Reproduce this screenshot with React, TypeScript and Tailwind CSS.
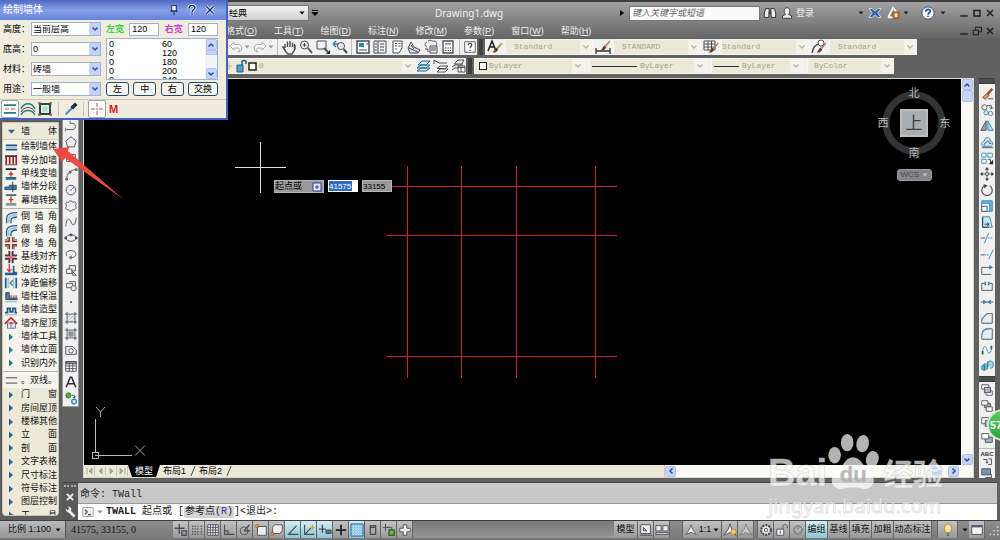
import type { ReactNode } from "react";

const Svg = (props: { children: ReactNode; className?: string; box?: string }) => (
  <svg
    viewBox={props.box ?? "0 0 16 16"}
    className={props.className ?? "size-4 shrink-0"}
    fill="none"
    stroke="#4a4d55"
    strokeWidth="1"
    aria-hidden="true"
  >
    {props.children}
  </svg>
);

const BLUE = "#2f86b8";
const PALE = "#cfe6f4";

const Down = ({ className = "size-1.5 shrink-0" }: { className?: string }) => (
  <Svg box="0 0 6 6" className={className}>
    <path d="M0.5 1.5H5.5L3 4.5Z" fill="currentColor" stroke="none" />
  </Svg>
);

const Brush = () => (
  <g stroke="none">
    <path d="M14.5 3.5 15.5 4.5 11 10 9.5 8.8Z" fill="#b98350" />
    <path d="M9.6 8.8 11.2 10.2C10.5 13 8 14 5.5 13.5 7.5 12.5 7 10 9.6 8.8Z" fill="#6b3a22" />
  </g>
);

/* ---------- draw toolbar ---------- */

const drawIcons: [string, ReactNode][] = [
  ["直线", <path d="M3 3 13 13" />],
  ["构造线", <path d="M2 14 14 2M6 6l4 4" />],
  ["多段线", <path d="M3 12H10C14 12 14 5 10 5H7V2M2 10v4" />],
  ["正多边形", <path d="M8 2 14 7 11.8 13.5H4.2L2 7Z" fill="#e9edf4" />],
  ["矩形", <path d="M3 4H13V12H3ZM2 3h2M12 13h2" />],
  ["圆弧", <path d="M3 14C3 8 7 3 14 3M2 13h2v2H2ZM13 2h2v2h-2ZM6 5h2v2H6Z" />],
  ["圆", <><circle cx="8" cy="8" r="5.5" fill="#eef0f5" /><path d="M8 8 12 4M7 8h2" stroke={BLUE} /></>],
  ["修订云线", <path d="M5 4C6 1 10 2 10 4 13 2 15 5 13 7.500 15 10 13 13 10 12 9 15 5 14 5 12 2 13 1 10 3 8 1 5 3 3 5 4Z" fill="#eef0f5" />],
  ["样条曲线", <path d="M2 13C3 3 6 3 8 8S13 13 14 3" />],
  ["椭圆", <><ellipse cx="8" cy="8" rx="6" ry="3.700" /><path d="M7 3.500h2v2H7ZM1 7h2v2H1ZM13 7h2v2h-2Z" fill="#4a4d55" /></>],
  ["椭圆弧", <path d="M3 10C1 6 5 4 8 4 12 4 15 7 13 10 12 12 10 12 8 12M8 10v4L6 12Z" />],
  ["插入块", <><path d="M6 3H13V9H6Z" fill="#e5e8ef" /><path d="M3 7H9V12H3ZM10 10v4h4L10 10" fill="#f6f6f6" /></>],
  ["创建块", <><path d="M3 5H10V10H3ZM6 3h7v5" fill="#f1f1f1" /><circle cx="11" cy="10.5" r="3" fill="#e5e8ef" /></>],
  ["点", <path d="M7 7h2v2H7Z" fill="#4a4d55" stroke="none" />],
  ["图案填充", <><path d="M3.5 1V15M12.5 1V15M1 3.500H15M1 12.500H15" /><path d="M4 8 8 4M4 12 12 4M8 12l4-4" stroke={BLUE} strokeDasharray="1 1" /></>],
  ["渐变色", <><path d="M5 5H11V11H5Z" fill="#8b93a3" stroke="none" /><path d="M3.5 1V15M12.5 1V15M1 3.500H15M1 12.500H15" /></>],
  ["面域", <><path d="M2 4H10L14 8V13H2Z" fill="#e9edf4" /><circle cx="8" cy="9" r="2.5" fill="#fff" /></>],
  ["表格", <><path d="M2 3H14V14H2ZM6 5V14M10 5V14M2 8H14M2 11H14" fill="#fff" /><path d="M2 3H14V5.500H2Z" fill="#8190a8" /></>],
  ["多行文字", <path d="M2.5 14 7.2 2.500H8.800L13.500 14M4.800 10H11.200" stroke="#303238" strokeWidth="1.8" />],
  ["添加选定对象", <><circle cx="5" cy="5" r="3" fill="#54ae3d" stroke="#347a28" /><path d="M9 5h3v3M10 7l2 1 1-2" /><circle cx="11.500" cy="12" r="2.7" fill={PALE} stroke={BLUE} strokeWidth="1.5" /></>],
];

/* ---------- modify toolbar ---------- */

const modifyIcons: [string, ReactNode][] = [
  ["删除", <><path d="M14 2 8 9" stroke="#8c5934" strokeWidth="3" /><path d="M8 7 10 10 6 14 3 12Z" fill="#e79b55" stroke="#8a3f25" /><path d="M9 13.500h6" /></>],
  ["复制", <><circle cx="5" cy="5" r="3" /><path d="M8 3h5v4M11 5l2 2 2-2" /><circle cx="7" cy="11" r="2.4" stroke={BLUE} /><circle cx="12" cy="12" r="2.5" stroke={BLUE} /></>],
  ["镜像", <><path d="M7 2V13H1Z" fill="#99a1ae" /><path d="M9 2V13H15Z" fill="#a8d6ef" stroke={BLUE} /></>],
  ["偏移", <><path d="M3 13C0 9 4 7 5 7 5 1 12 2 12 7 15 7 15 11 13 13Z" stroke={BLUE} fill={PALE} /><path d="M5 12C4 10 6 9 7 9 8 5 11 7 10.500 9.500H13M2 14.500h13" /></>],
  ["阵列", <><path d="M2 2.500H7V7H2ZM9 2.500H14V7H9ZM2 9.500H7V14H2Z" stroke={BLUE} fill="#fff" /><path d="M9 9.500H12V14" /><path d="M15 10v5h-5Z" fill="#222" stroke="none" /></>],
  ["移动", <><path d="M8 1V6M8 10V15M1 8H6M10 8H15M6.500 6.500h3v3h-3Z" /><path d="M8 0 10.500 3H5.500ZM8 16 10.500 13H5.500ZM0 8 3 5.500V10.500ZM16 8 13 5.500V10.500Z" fill="#444" stroke="none" /></>],
  ["旋转", <><path d="M5 3.200A6 6 0 1 0 11 3.200" strokeWidth="1.300" /><path d="M4 1 9 3 5 6Z" fill="#444" stroke="none" /></>],
  ["缩放", <><path d="M2 2H14V14H2Z" fill="#6fb9df" stroke={BLUE} /><path d="M2 5H11V14H2Z" fill="#e8f3fa" stroke={BLUE} /><path d="M2 8.500H8V14H2Z" fill="#fff" /></>],
  ["拉伸", <><path d="M5 2H11L14 14H3V2Z" fill="#c5e3f3" stroke={BLUE} /><path d="M3 2V14H10M5 10.500h5M8 8.500l2.500 2L8 12.500" stroke="#333" /></>],
  ["修剪", <><path d="M1 8H6" /><path d="M5 14 10 2" stroke={BLUE} /><path d="M9 8h6" stroke={BLUE} strokeDasharray="2 1" /></>],
  ["延伸", <><path d="M1 9H5" /><path d="M5 9h6" stroke={BLUE} strokeDasharray="2 1" /><path d="M10 14 15 3" stroke={BLUE} /></>],
  ["打断于点", <><path d="M14 5H2V13H13" /><path d="M11 3v4l3-2Z" fill={BLUE} stroke={BLUE} /></>],
  ["打断", <><path d="M5 5H2V13H14V5H11" fill="#e9edf4" /><path d="M5 3h2v4H5ZM9 3h2v4H9Z" fill={BLUE} stroke="none" /></>],
  ["合并", <><path d="M1 8H15" /><path d="M4 6 7 8 4 10ZM12 6 9 8 12 10Z" fill={BLUE} stroke={BLUE} /></>],
  ["倒角", <><path d="M8 3H14V14H2V9" fill="#e4ebf3" /><path d="M2 9 8 3" stroke={BLUE} strokeWidth="1.5" /></>],
  ["圆角", <><path d="M10 2H14V14H2V10" fill="#e4ebf3" /><path d="M2 10C2 5 5 2 10 2" stroke={BLUE} strokeWidth="1.5" /></>],
  ["光顺曲线", <><path d="M3 13V9M13 3V7" strokeWidth="2" /><path d="M3 9C4 2 7 3 8 8S12 13 13 7" stroke={BLUE} /></>],
  ["分解", <><path d="M2 8 6 5 9 7V11L5 13 2 12Z" fill="#69b8d8" stroke={BLUE} /><path d="M8 4 12 2 15 4V9L12 11" fill="#a6d5eb" stroke={BLUE} /><path d="M9 3v6M5 7v5" stroke="#1d617f" /></>],
];

const orderIcons: [string, ReactNode][] = [
  ["前置", <><path d="M2 2H10V7H2ZM7 9H14V14H7Z" fill="#fff" /><path d="M5 5H12V11H5Z" fill="#a9b1bd" /></>],
  ["后置", <><path d="M5 5H12V10H5Z" fill="#a9b1bd" /><path d="M2 2H9V7H2ZM7 9H14V14H7Z" fill="#fff" /></>],
  ["置于对象之上", <><path d="M2 3H10V10H2Z" fill="#fff" /><path d="M6 6H14V13H6Z" fill="#a9b1bd" /></>],
  ["置于对象之下", <><path d="M6 7H14V13H6Z" fill="#a9b1bd" /><path d="M2 3H10V9H2Z" fill="#fff" /></>],
];

const ToolColumn = ({ items }: { items: [string, ReactNode][] }) => (
  <>
    {items.map(([name, art]) => (
      <button key={name} type="button" aria-label={name} className="flex h-4 w-full shrink-0 items-center justify-center">
        <Svg className="size-3.5">{art}</Svg>
      </button>
    ))}
  </>
);

const Grip = () => <div className="h-1.5 shrink-0 border-y border-[#3c3c3c] bg-[#4c4c4c]" />;

/* ---------- left palette ---------- */

const wallTools: [string, ReactNode][] = [
  ["绘制墙体", <><path d="M2 6H15M2 11H15" stroke="#27527e" strokeWidth="2" /><path d="M2 8.500H15" stroke="#a5c5df" strokeWidth="2" /></>],
  ["等分加墙", <><path d="M1 3.500H15" stroke="#333" strokeWidth="2" /><path d="M2.500 4V13M6.500 4V13M10.500 4V13M14 4V13" stroke="#9e2633" strokeWidth="2" /><path d="M1 13.500h14" /></>],
  ["单线变墙", <><path d="M2 2.500H14" stroke="#222" strokeWidth="2" /><path d="M8 5V11M5.500 8H10.500" stroke="#d02b2b" strokeWidth="1.500" /><path d="M2 13H14" stroke="#2b678b" strokeWidth="3" /></>],
  ["墙体分段", <><path d="M1 8H6V6H14V11H1Z" fill="#4779a4" stroke="#24557e" /><path d="M10 2V14" stroke="#24334d" /></>],
  ["幕墙转换", <><path d="M2 2.500H14" stroke="#466" strokeWidth="2" /><path d="M8 4V11M5.500 7.500H10.500" stroke="#d02b2b" strokeWidth="1.500" /><path d="M2 13H14" stroke="#849d9d" strokeWidth="3" /></>],
];

const filletArt = <><path d="M3 15V9C3 5 6 3 15 3M8 15V12C8 9 10 8 15 8" stroke="#285f92" strokeWidth="1.500" /><path d="M5.500 15V10C5.500 7 8 5.500 15 5.500" stroke="#9ac5e5" strokeWidth="2" /></>;

const editTools: [string, ReactNode][] = [
  ["倒 墙 角", filletArt],
  ["倒 斜 角", filletArt],
  ["修 墙 角", <><path d="M6 1V6H1M10 1V6H15M6 15V10H1M10 15V10H15" stroke="#8c3a31" strokeWidth="2" /><path d="M4 1V4H1M12 1V4H15M4 15V12H1M12 15V12H15" stroke="#5f88ac" /></>],
  ["基线对齐", <><path d="M6 1V6H1M10 1V6H15M6 15V10H1M10 15V10H15" stroke="#413f4c" strokeWidth="2" /><path d="M8 2V14M2 8H14" stroke="#ce2f38" /></>],
  ["边线对齐", <><path d="M1 12.500H15" stroke="#285f92" strokeWidth="3" /><path d="M11 3V11H15" stroke="#285f92" strokeWidth="2" /><path d="M6 1V10M3.500 7 6 10 8.500 7" stroke="#d8324a" strokeWidth="1.500" /></>],
  ["净距偏移", <><path d="M2 2V14M14 2V14" stroke="#29618c" strokeWidth="2" /><path d="M5 2V14M11 2V14" stroke="#a2c8df" strokeWidth="2" /><path d="M10 5 7 8 10 11" stroke="#267b86" strokeWidth="1.500" /></>],
  ["墙柱保温", <><path d="M2 3V11H15V9H6V3Z" fill="#55799a" stroke="#273e5e" /><path d="M7 7h8" stroke="#a43e3e" strokeWidth="1.500" strokeDasharray="2 1" /><path d="M1 13.500h14" stroke="#7babc9" /></>],
  ["墙体造型", <><path d="M1 11H4V6H7V10H10V6H13V11H15" stroke="#225c8c" strokeWidth="2" /><path d="M1 13.500H15" stroke="#7babc9" /></>],
  ["墙齐屋顶", <><path d="M4 8H13V14H4Z" fill="#dfeaf2" stroke="#4c6e90" /><path d="M1 9 8 2 15 9" stroke="#be2735" strokeWidth="2" /><path d="M8 13V7M6 9l2-2 2 2" stroke="#be2735" /></>],
  ["墙体工具", "teal"],
  ["墙体立面", "teal"],
  ["识别内外", "teal"],
];

const moreTools = ["门 窗", "房间屋顶", "楼梯其他", "立 面", "剖 面", "文字表格", "尺寸标注", "符号标注", "图层控制", "工 具"];

const PaletteRow = ({ label, art }: { label: string; art: ReactNode }) => (
  <button type="button" className="flex min-h-0 w-full items-center gap-[3px] pl-px">
    {art === "teal" || art === "navy" ? (
      <Svg box="0 0 14 14" className="size-3.5 shrink-0">
        <path d="M5 3.500V10.500L9 7Z" fill={art === "teal" ? "#178079" : "#2d5f94"} stroke="none" />
      </Svg>
    ) : (
      <Svg className="size-3.5 shrink-0">{art}</Svg>
    )}
    <span className="flex w-9 justify-between whitespace-nowrap">
      {label.split(" ").map((part) => (
        <span key={part}>{part}</span>
      ))}
    </span>
  </button>
);

const Palette = () => (
  <nav aria-label="墙体" className="flex w-[62px] shrink-0 flex-col bg-[#5d5d5d] pt-[44px] pr-[3px] pb-1 pl-[2px]">
    <div className="flex min-h-0 flex-1 flex-col overflow-hidden rounded-b-sm border border-[#c9c6b4] bg-[#f4f3ec] text-[9px] text-[#111]">
      <div className="grid h-[17px] shrink-0 border-b border-[#cdcab8] bg-[#ece9d8]">
        <PaletteRow
          label="墙 体"
          art={<path d="M4.500 6.500H12.500L8.500 11Z" fill="#2d5f94" stroke="none" />}
        />
      </div>
      <div className="grid h-[67px] shrink-0 auto-rows-fr">
        {wallTools.map(([label, art]) => <PaletteRow key={label} label={label} art={art} />)}
      </div>
      <hr className="my-px border-[#b9b7aa]" />
      <div className="grid h-[160px] shrink-0 auto-rows-fr">
        {editTools.map(([label, art]) => <PaletteRow key={label} label={label} art={art} />)}
      </div>
      <hr className="mt-px border-[#b9b7aa]" />
      <div className="grid h-4 shrink-0">
        <PaletteRow label="。双线。" art={<path d="M2 5.500H15M2 11.500H15" stroke="#333" />} />
      </div>
      <div className="grid h-[134px] shrink-0 auto-rows-fr bg-[#ece9d8]">
        {moreTools.map((label) => <PaletteRow key={label} label={label} art="navy" />)}
      </div>
    </div>
  </nav>
);

/* ---------- floating wall dialog ---------- */

const XpSelect = ({ id, value }: { id: string; value: string }) => (
  <div className="relative h-3.5 w-[70px]">
    <select id={id} defaultValue={value} className="h-full w-full appearance-none border border-[#9fb2d0] bg-white pl-px leading-none text-black">
      <option>{value}</option>
    </select>
    <span className="pointer-events-none absolute inset-y-px right-px flex w-[11px] items-center justify-center rounded-[1px] bg-[#c3d3fb]">
      <Svg box="0 0 8 8" className="size-2"><path d="M1.500 2.500 4 5 6.500 2.500" stroke="#33508c" strokeWidth="1.500" /></Svg>
    </span>
  </div>
);

const fields = [
  ["高度", "当前层高"],
  ["底高", "0"],
  ["材料", "砖墙"],
  ["用途", "一般墙"],
];

const widths = [60, 120, 180, 200, 240];

const ScrollArrow = ({ d, label }: { d: string; label: string }) => (
  <button type="button" aria-label={label} className="flex size-[11px] shrink-0 items-center justify-center rounded-[2px] border border-[#aebff0] bg-[#c6d5fc]">
    <Svg box="0 0 8 8" className="size-2 shrink-0"><path d={d} stroke="#2f4c8c" strokeWidth="1.500" /></Svg>
  </button>
);
const UP = "M1.500 5.500 4 3 6.500 5.500";
const DOWN = "M1.500 2.500 4 5 6.500 2.500";
const LEFT = "M5.500 1.500 3 4 5.500 6.500";
const RIGHT = "M2.500 1.500 5 4 2.500 6.500";

const WallDialog = () => (
  <section aria-label="绘制墙体" className="absolute top-0 left-0 z-20 w-[228px] border-r-2 border-b-2 border-[#4660bd] bg-[#f0eddf] text-[9px] leading-none text-black">
    <header className="flex h-5 items-center bg-linear-to-b from-[#4e68c4] via-[#86a0e8] to-[#6784d8] pr-2.5 pl-[3px]">
      <h2 className="flex-1 text-[10px] text-white">绘制墙体</h2>
      <div className="flex gap-1.5">
        <button type="button" aria-label="固定"><Svg className="size-3"><path d="M5 2H11V9H5ZM3 9.500H13M8 10V15" fill="#fff" stroke="#1c396b" strokeWidth="1.500" /></Svg></button>
        <button type="button" aria-label="帮助"><Svg className="size-3"><path d="M4 6C4 1 12 1 12 5 12 8 8 7 8 11M8 12.500V15" stroke="#fff" strokeWidth="4" /><path d="M4 6C4 1 12 1 12 5 12 8 8 7 8 11M8 12.500V15" stroke="#1c396b" strokeWidth="2" /></Svg></button>
        <button type="button" aria-label="关闭"><Svg className="size-3"><path d="M3 3 13 13M13 3 3 13" stroke="#fff" strokeWidth="4" /><path d="M3 3 13 13M13 3 3 13" stroke="#1c396b" strokeWidth="2" /></Svg></button>
      </div>
    </header>
    <div className="flex gap-[5px] px-[3px] pt-0.5 pb-[3px]">
      <div className="flex flex-col gap-1.5">
        {fields.map(([label, value]) => (
          <div key={label} className="flex items-center">
            <label htmlFor={label} className="w-7 whitespace-nowrap">{label}：</label>
            <XpSelect id={label} value={value} />
          </div>
        ))}
      </div>
      <div className="flex w-28 flex-col">
        <div className="flex h-3.5 items-center justify-between">
          <label htmlFor="left-width" className="font-bold text-[#44d044]">左宽</label>
          <input id="left-width" defaultValue="120" className="h-[13px] w-[30px] border border-[#9fb2d0] bg-white px-0.5" />
          <label htmlFor="right-width" className="font-bold text-[#cf3fc9]">右宽</label>
          <input id="right-width" defaultValue="120" className="h-[13px] w-[30px] border border-[#9fb2d0] bg-white px-0.5" />
        </div>
        <div className="mt-0.5 flex h-[42px] border border-[#9fb2d0] bg-white">
          <ul className="flex-1 overflow-hidden pt-px pl-0.5 leading-[9px]">
            {widths.map((w) => (
              <li key={w} className="grid grid-cols-[53px_1fr]"><span>0</span><span>{w}</span></li>
            ))}
          </ul>
          <div className="flex w-3 flex-col items-center bg-[#f2f3f8]">
            <ScrollArrow d={UP} label="向上" />
            <div className="h-[5px] w-[11px] border border-[#aebff0] bg-[#c6d5fc]" />
            <div className="flex-1" />
            <ScrollArrow d={DOWN} label="向下" />
          </div>
        </div>
        <div className="mt-0.5 flex justify-between">
          {["左", "中", "右", "交换"].map((t) => (
            <button key={t} type="button" className="h-3.5 min-w-[23px] rounded-[3px] border border-[#254a70] bg-[#f6f5ee] px-[5px] text-[9px]">{t}</button>
          ))}
        </div>
      </div>
    </div>
    <div className="flex h-[19px] items-center gap-px border-t border-[#cbc8b8] pl-px">
      <button type="button" aria-label="直墙" className="rounded-[2px] border border-[#8fa6bd] bg-white p-px"><Svg className="size-3.5"><path d="M1 3.500H15M1 12.500H15" stroke="#267b86" strokeWidth="2" /><path d="M2 8H14" stroke="#c62f2f" strokeDasharray="5 2" /></Svg></button>
      <button type="button" aria-label="弧墙"><Svg className="size-4"><path d="M1 8C4 1 12 1 15 8M1 14C4 8 12 8 15 14" stroke="#267b86" strokeWidth="1.500" /><path d="M1 11C4 5 12 5 15 11" stroke="#77383c" /></Svg></button>
      <button type="button" aria-label="矩形墙"><Svg className="size-4"><path d="M3 3H13V13H3Z" stroke="#1f4f48" strokeWidth="2" /><path d="M2 1v3M1 2h3M14 1v3M12 2h3M2 12v3M1 14h3M14 12v3M12 14h3" stroke="#af4a40" /><path d="M5.500 5.500h5v5h-5Z" fill="#b7d9d1" stroke="none" /></Svg></button>
      <span className="mx-1 h-3.5 w-px bg-[#c8c5b4]" />
      <button type="button" aria-label="拾取"><Svg className="size-3.5"><path d="M2 14 9 7" stroke="#4f9cb8" strokeWidth="2.500" /><path d="M8 5 11 8" stroke="#172c55" strokeWidth="2" /><path d="M10 6 14 2" stroke="#172c55" strokeWidth="4" /></Svg></button>
      <span className="mr-[3px] ml-1 h-3.5 w-px bg-[#c8c5b4]" />
      <button type="button" aria-label="捕捉" className="rounded-[2px] border border-[#8fa6bd] bg-white p-px"><Svg className="size-3.5"><path d="M8 1V6M8 10V15M1 8H6M10 8H15M7 8h2" stroke="#b03b36" /></Svg></button>
      <button type="button" className="px-0.5 text-[11px] font-bold text-[#cf1c1c]">M</button>
    </div>
  </section>
);

/* ---------- title, menus and toolbars ---------- */

const menus = [["格式", "O"], ["工具", "T"], ["绘图", "D"], ["标注", "N"], ["修改", "M"], ["参数", "P"], ["窗口", "W"], ["帮助", "H"]];

const TitleBar = () => (
  <header className="flex h-[22px] shrink-0 items-center pr-1 pl-[227px] text-[9px] text-[#eee]">
    <div className="relative h-4 w-[82px] text-black">
      <select aria-label="工作空间" defaultValue="经典" className="h-full w-full appearance-none rounded-[1px] border border-[#777] bg-linear-to-b from-[#f3f3f3] to-[#cfcfcf] pl-px leading-none">
        <option>经典</option>
      </select>
      <Down className="pointer-events-none absolute top-[5px] right-1 size-1.5" />
    </div>
    <Svg box="0 0 8 8" className="ml-0.5 size-2 shrink-0"><path d="M1 1.500H7M1 3.500H7L4 6.500Z" fill="#000" stroke="#111" /></Svg>
    <h1 className="flex-1 text-center text-[10px] [font-family:'Noto_Sans',sans-serif]">Drawing1.dwg</h1>
    <Svg box="0 0 6 6" className="mr-1 size-1.5"><path d="M1 0V6L5 3Z" fill="#000" stroke="none" /></Svg>
    <input type="search" aria-label="搜索" placeholder="键入关键字或短语" className="h-[15px] w-[131px] border border-[#777] bg-[#fafafa] px-0.5 italic placeholder:text-[#666]" />
    <button type="button" aria-label="查找" className="ml-[3px]"><Svg className="size-3.5"><path d="M3 3H7V7L6.500 13H1.500V8ZM13 3H9V7L9.500 13H14.500V8Z" fill="#eee" stroke="#222" /><path d="M7 6h2v3H7Z" fill="#222" /></Svg></button>
    <button type="button" className="ml-1 flex items-center gap-[3px]">
      <Svg className="size-3"><path d="M2 15V12L6 10C3 6 4 1 8 1S13 6 10 10L14 12V15Z" fill="#eee" stroke="#222" /></Svg>登录
    </button>
    <span className="ml-11 text-[#222]"><Down /></span>
    <button type="button" aria-label="交换" className="ml-1"><Svg className="size-3.5"><path d="M1 3H5L8 6 11 3H15L11 8 15 13H11L8 10 5 13H1L5 8Z" fill="#2f5fa5" stroke="#dbe4f4" /></Svg></button>
    <button type="button" aria-label="通信中心" className="ml-1 flex items-center gap-[3px] text-[#222]"><Svg className="size-3.5"><path d="M3 12 8 2 12 7M2 13H9" stroke="#f4f4f4" strokeWidth="2" /><path d="M8 7H15V14H8Z" fill="#e08b32" stroke="#7e481b" /><path d="M11.500 8.500V12.500" stroke="#fff" strokeWidth="2" /></Svg><Down /></button>
    <button type="button" aria-label="帮助" className="ml-3 flex items-center gap-[5px] text-[#222]">
      <Svg className="size-3.5"><circle cx="8" cy="8" r="7" fill="#f8f8f8" stroke="#2d4a78" /><path d="M5.500 6.500C5.500 3 10.500 3 10.500 6 10.500 8 8 8 8 10M8 11V12.500" stroke="#1e55a5" strokeWidth="2" /></Svg><Down />
    </button>
    <div className="ml-3 flex gap-px">
      <button type="button" aria-label="最小化"><Svg className="size-3"><path d="M3 12H13" stroke="#222" strokeWidth="2" /></Svg></button>
      <button type="button" aria-label="最大化"><Svg className="size-3"><path d="M4 4.500H12V12H4Z" stroke="#222" strokeWidth="2" /></Svg></button>
      <button type="button" aria-label="关闭窗口"><Svg className="size-3"><path d="M4 4 12 12M12 4 4 12" stroke="#222" strokeWidth="2" /></Svg></button>
    </div>
  </header>
);

const MenuBar = () => (
  <nav className="flex h-3.5 shrink-0 items-center gap-[17px] pr-1 pl-[226px] text-[9px] leading-none text-[#eee]">
    {menus.map(([name, key]) => (
      <button key={key} type="button" className="whitespace-nowrap">{name}(<u>{key}</u>)</button>
    ))}
    <div className="ml-auto flex gap-px">
      <button type="button" aria-label="最小化图形"><Svg className="size-3"><path d="M3 12H13" stroke="#222" strokeWidth="2" /></Svg></button>
      <button type="button" aria-label="还原图形"><Svg className="size-3"><path d="M6 6V3H14V9H11M3 7H10V13H3Z" stroke="#222" strokeWidth="1.500" /></Svg></button>
      <button type="button" aria-label="关闭图形"><Svg className="size-3"><path d="M4 4 12 12M12 4 4 12" stroke="#222" strokeWidth="2" /></Svg></button>
    </div>
  </nav>
);

const lens = <><circle cx="6.500" cy="6" r="4" fill="#eef2f8" /><path d="M10 9 14 14" strokeWidth="2" /></>;

const viewIcons: [string, ReactNode][] = [
  ["平移", <path d="M4 9V5M6.500 8V2.500M9 8V2M11.500 8V3.500M4 9 1.500 7.500 5 13 7 15H11L14 10V6M13.500 5V10" strokeWidth="1.400" />],
  ["实时缩放", <>{lens}<path d="M6.500 4V8M4.500 6H8.500" /></>],
  ["窗口缩放", <><path d="M2 2H11V10H2Z" fill="#eef2f8" /><path d="M9 9 13 13" strokeWidth="2" /><path d="M15 11v4h-4Z" fill="#222" stroke="none" /></>],
  ["缩放上一个", <><path d="M1 5H7M1 5 4 2M1 5 4 8" stroke={BLUE} strokeWidth="1.500" /><circle cx="9" cy="7" r="3.5" fill="#eef2f8" /><path d="M11.500 10 15 14" strokeWidth="2" /></>],
];

const paletteIcons: [string, ReactNode][] = [
  ["特性", <><path d="M2 2H14V14H2Z" fill="#fff" strokeWidth="1.500" /><path d="M4 4H9V8H4Z" fill={BLUE} stroke="none" /><path d="M4 11H12M11 5h2" /></>],
  ["设计中心", <path d="M2 2H14V14H2ZM6 2V14M8 5h4M8 8h4M8 11h4M3 5h2M3 8h2M3 11h2" fill="#eef2f8" />],
  ["工具选项板", <path d="M4 2H13V9L10 14H4ZM6 4.500h2M9.500 4.500h2M6 7h2M9.500 7h2M6 10h2" fill="#fff" />],
  ["图纸集", <path d="M2 9 5 3 8 8 14 11 12 14H4ZM3 9 12 13M5 6 8 10" fill="#d9dee8" />],
  ["标记集", <path d="M5 2C8 0 9 3 11 2 14 2 14 5 13 7M4 3C1 4 2 7 4 8M7 7H14V14H7ZM2 10H5V13M8 9h5M8 11h5" fill="#eef2f8" />],
  ["快速计算器", <><path d="M3 2H13V14H3Z" fill="#fff" strokeWidth="1.300" /><path d="M5 4H11V6H5Z" fill="#94a1b5" stroke="none" /><path d="M5 9h6M5 11.500h6" strokeDasharray="1.500 1" /></>],
];

const ToolButtons = ({ items }: { items: [string, ReactNode][] }) => (
  <div className="flex gap-px">
    {items.map(([name, art]) => (
      <button key={name} type="button" aria-label={name}><Svg className="size-4">{art}</Svg></button>
    ))}
  </div>
);

const Sep = () => <span className="mx-[3px] h-4 w-px shrink-0 bg-[#bdbdbd]" />;

const DimCombo = (props: { label: string; value: string; width: string; pad: string; line?: string; swatch?: boolean }) => (
  <div className={`relative flex h-4 items-center border border-[#f8f7ef] bg-[#ece9d8] ${props.width}`}>
    {props.line && <span className={`absolute left-0.5 h-px bg-[#333] ${props.line}`} />}
    {props.swatch && <span className="absolute left-1 size-2 border border-[#222] bg-white" />}
    <select
      aria-label={props.label}
      defaultValue={props.value}
      className={`h-full w-full appearance-none text-[8px] leading-none text-[#a6a28e] [font-family:'Liberation_Mono',monospace] ${props.pad}`}
    >
      <option>{props.value}</option>
    </select>
    <span className="pointer-events-none absolute inset-y-0 right-0 flex w-3 items-center justify-center bg-[#f3f1e8]">
      <Svg box="0 0 8 8" className="size-2"><path d={DOWN} stroke="#b9b6a5" strokeWidth="1.500" /></Svg>
    </span>
  </div>
);

const styleSets: [string, string, string, ReactNode][] = [
  ["文字样式", "Standard", "pl-2", <><path d="M1 12 5 2 9 12M2.500 8H7.500" stroke="#222" strokeWidth="1.500" /><Brush /></>],
  ["标注样式", "STANDARD", "pl-2", <><path d="M1 9V15M15 9V15M1 12H15" stroke="#333" strokeWidth="1.300" /><g transform="translate(0 -2)"><Brush /></g></>],
  ["表格样式", "Standard", "pl-0", <><path d="M1 2H12V11H1ZM1 5H12M1 8H12M5 2V11M8.500 2V11" fill="#fff" /><Brush /></>],
  ["多重引线样式", "Standard", "pl-2", <><circle cx="10" cy="4" r="3" fill="#fff" /><path d="M7 5 3 8 1 14" strokeWidth="1.500" /><Brush /></>],
];

const Toolbars = () => (
  <div className="flex shrink-0 flex-col gap-[3px] pt-px pb-1 pl-[228px]">
    <div className="flex h-4 items-center">
      <div className="flex h-full w-[249px] items-center bg-[#f1f1f1] text-[#999]">
        <button type="button" aria-label="放弃"><Svg className="size-4"><path d="M6 3 2 7 6 11V9H10C12 9 12 12 10 13 15 13 15 5 10 5.500H6Z" fill="#fafafa" stroke="#a9a9a9" /></Svg></button>
        <Down />
        <button type="button" aria-label="重做" className="ml-0.5"><Svg className="size-4"><path d="M10 3 14 7 10 11V9H6C4 9 4 12 6 13 1 13 1 5 6 5.500H10Z" fill="#fafafa" stroke="#a9a9a9" /></Svg></button>
        <Down /><Sep />
        <ToolButtons items={viewIcons} /><Sep />
        <ToolButtons items={paletteIcons} /><Sep />
        <button type="button" aria-label="帮助"><Svg className="size-3.5"><path d="M2 2H14V14H2Z" fill="#fff" /><path d="M6 6C6 3 10 3 10 6 10 8 8 7.500 8 9.500M8 11V12.500" strokeWidth="1.500" /></Svg></button>
      </div>
      <span className="mx-0.5 h-4 w-1 bg-[#3f3f3f]" />
      <div className="flex h-full items-center bg-[#f1f1f1]">
        {styleSets.map(([name, value, pad, art]) => (
          <div key={name} className="flex items-center">
            <button type="button" aria-label={name} className="flex w-5 justify-center"><Svg className="size-4">{art}</Svg></button>
            <DimCombo label={name} value={value} width="w-[88px]" pad={pad} />
          </div>
        ))}
      </div>
    </div>
    <div className="flex h-4 items-center">
      <div className="flex h-full w-[238px] items-center gap-px bg-[#f1f1f1]">
        <div className="relative flex items-center">
          <DimCombo label="图层" value="0" width="w-[187px]" pad="pl-[30px]" />
          <Svg box="0 0 32 16" className="pointer-events-none absolute left-0 h-4 w-8">
            <path d="M1 4v8M0 8h4" stroke="#bbb" />
            <path d="M9 7H15V14H9Z" fill="#4ba0d0" stroke="#235c87" />
            <path d="M14 7V4C14 2 18 2 18 4V6" stroke="#235c87" strokeWidth="1.500" />
            <path d="M21 5H28V12H21Z" fill="#fff" stroke="#222" strokeWidth="1.500" />
          </Svg>
        </div>
        <button type="button" aria-label="图层特性"><Svg className="size-4"><path d="M1 13 5 10H14L10 13ZM1 10 5 7H14L10 10ZM2 7 6 3H14L10 7Z" fill={PALE} stroke="#25638f" /></Svg></button>
        <button type="button" aria-label="上一个图层"><Svg className="size-4"><path d="M4 14 7 11H15L12 14ZM4 10.500 7 8H15L12 10.500ZM1 2 6 5H14M1 2v4" fill="#fff" /></Svg></button>
        <button type="button" aria-label="图层状态"><Svg className="size-4"><path d="M2 12 5 10H9M2 9 5 7H13M4 6 8 2H14L12 6Z" /><path d="M8 8H15V14H8Z" fill="#fff" /><path d="M8 9.500h7M11 10v4" /></Svg></button>
      </div>
      <span className="mx-0.5 h-4 w-1 bg-[#3f3f3f]" />
      <div className="flex h-full items-center gap-1 bg-[#f1f1f1]">
        <DimCombo label="颜色" value="ByLayer" width="w-[111px]" pad="pl-3.5" swatch />
        <DimCombo label="线型" value="ByLayer" width="w-[118px]" pad="pl-[50px]" line="w-[45px]" />
        <DimCombo label="线宽" value="ByLayer" width="w-[92px]" pad="pl-[30px]" line="w-[25px]" />
        <DimCombo label="打印样式" value="ByColor" width="w-[87px]" pad="pl-1.5" />
      </div>
    </div>
  </div>
);

/* ---------- drawing area ---------- */

const ViewCube = () => (
  <div className="absolute top-2 right-2.5 flex flex-col items-center text-[11px] leading-none text-[#bdbdbd]">
    <div className="grid w-[74px] grid-cols-[12px_1fr_12px] grid-rows-[12px_1fr_12px] place-items-center">
      <svg viewBox="0 0 64 64" className="col-span-3 col-start-1 row-span-3 row-start-1 size-16" aria-hidden="true">
        <circle cx="32" cy="32" r="28" fill="none" stroke="#343434" strokeWidth="7" />
      </svg>
      <span className="z-10 col-start-2 row-start-1">北</span>
      <span className="z-10 col-start-1 row-start-2">西</span>
      <button type="button" className="z-10 col-start-2 row-start-2 my-2.5 flex size-7 items-center justify-center border-2 border-[#bdbdbd] bg-[#a8adb0] text-[17px] text-[#3d4348]">上</button>
      <span className="z-10 col-start-3 row-start-2">东</span>
      <span className="z-10 col-start-2 row-start-3">南</span>
    </div>
    <button type="button" className="mt-2.5 flex h-3 w-[35px] items-center justify-between rounded-[3px] border border-[#9a9aa6] bg-[#85858f] px-[3px] text-[8px] text-[#4d4d55]">WCS <Down className="size-1.5 text-[#c5c5cd]" /></button>
  </div>
);

const Drawing = () => (
  <div className="relative min-h-0 min-w-0 flex-1 overflow-hidden bg-black">
    <svg width="876" height="388" className="absolute top-0 left-0" fill="none" shapeRendering="crispEdges" aria-hidden="true">
      <g fill="#c82424">
        {[323, 377, 432, 511].map((x) => <rect key={x} x={x} y="87" width="1" height="212" />)}
        {[107, 156, 277].map((y) => <rect key={y} x="302" y={y} width="231" height="1" />)}
      </g>
      <path d="M151 88.500H202M176.500 63V114" stroke="#e0e0e0" />
      <path d="M11.500 340V373M15 376.500H48M8.500 373.500H14.500V379.500H8.500ZM10.500 376.500h3" stroke="#b8b8b8" />
      <path d="M12 328 16.500 333 21 328M16.500 333V338M51 366.500 61 376.500M61 366.500 51 376.500" stroke="#a8a8a8" shapeRendering="auto" />
    </svg>
    <div className="absolute top-[101px] left-[190px] flex gap-1 text-[9px] leading-none">
      <label htmlFor="point-x" className="flex h-[13px] w-[50px] items-center justify-between border border-[#b5b5b5] bg-[#9a9a9a] pr-px text-black">
        起点或
        <Svg box="0 0 10 10" className="size-2.5"><path d="M1 1H9V9H1Z" fill="#e4e4f4" stroke="#3c3c9c" /><path d="M5 3V7M3 5H7" stroke="#3c3c9c" /></Svg>
      </label>
      <div className="flex h-3 w-[30px] items-center bg-white pl-px">
        <input id="point-x" defaultValue="41575" className="h-[10px] w-[23px] bg-[#316ac5] text-[8px] text-white" />
      </div>
      <input aria-label="Y" defaultValue="33155" className="h-3 w-[30px] border border-[#b5b5b5] bg-[#9a9a9a] text-[8px] text-black" />
    </div>
    <ViewCube />
  </div>
);

const SheetTabs = () => (
  <div className="flex h-3 shrink-0 items-center bg-[#ece9d8] text-[9px] leading-none text-black">
    {["M3 2V8M8 2 5 5 8 8Z", "M7 2 4 5 7 8Z", "M4 2 7 5 4 8Z", "M3 2 6 5 3 8ZM8 2V8"].map((d) => (
      <button key={d} type="button" aria-label="切换布局" className="border-r border-[#c9c6b6]"><Svg box="0 0 10 10" className="size-2.5"><path d={d} fill="#aaa796" stroke="#aaa796" /></Svg></button>
    ))}
    <button type="button" className="h-full bg-black px-[7px] text-white [clip-path:polygon(0_0,100%_0,calc(100%-4px)_100%,4px_100%)]">模型</button>
    {["布局1", "布局2"].map((t) => (
      <button key={t} type="button" className="flex items-center gap-1 pl-[3px]">
        {t}<Svg box="0 0 6 12" className="h-3 w-1.5"><path d="M5 1 1 11" /></Svg>
      </button>
    ))}
    <div className="ml-auto flex h-full w-[312px] items-center bg-[#fbfbf6] pr-3.5">
      <span className="h-full w-1 border-r border-[#ccc] bg-[#ece9d8]" />
      <ScrollArrow d={LEFT} label="向左" />
      <span className="flex-1" />
      <span className="h-2.5 w-2.5 rounded-[2px] bg-[#c6d5fc]" />
      <span className="w-1.5" />
      <ScrollArrow d={RIGHT} label="向右" />
    </div>
  </div>
);

const CommandLine = () => (
  <section aria-label="命令行" className="mr-[3px] flex h-[38px] shrink-0 border-t border-[#474747] bg-[#c8c8c8] text-[10px] leading-none text-[#222] [font-family:'Liberation_Mono','Noto_Sans_CJK_SC',monospace]">
    <div className="flex w-4 shrink-0 flex-col items-center justify-between bg-[#595959] py-0.5">
      <span className="w-3 border-t-2 border-dotted border-[#aaa]" />
      <button type="button" aria-label="关闭命令行"><Svg className="size-2.5"><path d="M3 3 13 13M13 3 3 13" stroke="#eee" strokeWidth="3" /></Svg></button>
      <button type="button" aria-label="自定义"><Svg className="size-3"><path d="M7 7 14 14" stroke="#eee" strokeWidth="3.500" /><path d="M2 3 5 6 7 3 5 1C9 0 11 4 9 7S3 9 2 3Z" fill="#eee" stroke="none" /></Svg></button>
    </div>
    <div className="flex min-w-0 flex-1 flex-col">
      <p className="flex flex-1 items-center border-b border-[#999] pt-1 pl-0.5">命令: TWall</p>
      <div className="flex h-4 items-center bg-white pl-1">
        <Svg className="size-3"><path d="M1 2H15V14H1Z" fill="#eef0f5" stroke="#8a8f99" /><path d="M4 5 7 8 4 11M8 11.500h4" strokeWidth="1.500" /></Svg>
        <span className="mx-[3px] text-[#888]"><Down /></span>
        <label htmlFor="command" className="flex items-center whitespace-pre">
          <b>TWALL</b> 起点或 [<span className="rounded-[2px] bg-[#d3d3d6] px-px py-px">参考点(<span className="text-[#2b37b8]">R</span>)</span>]&lt;退出&gt;:
        </label>
        <input id="command" className="min-w-0 flex-1 bg-white px-0.5 outline-none" />
      </div>
    </div>
  </section>
);

/* ---------- status bar ---------- */

const snapButtons: { name: string; on?: boolean; art: ReactNode }[] = [
  { name: "推断约束", art: <path d="M6 1V12M1 6H12M9 9h5v5H9Z" strokeWidth="1.500" /> },
  { name: "捕捉", art: <path d="M3 3V14M6 3V14M9 3V14M13 3V14" strokeDasharray="1.500 1.500" strokeWidth="1.500" /> },
  { name: "栅格", art: <><path d="M2 2H14V14H2Z" fill="#f4f4f4" /><path d="M5 2V14M8 2V14M11 2V14M2 5H14M2 8H14M2 11H14" /></> },
  { name: "正交", art: <path d="M3 2V13H14M3 9h4v4" strokeWidth="1.300" /> },
  { name: "极轴", art: <><circle cx="7" cy="9" r="4.500" /><path d="M7 9 13 2M7 9H14" strokeWidth="1.500" /></> },
  { name: "对象捕捉", art: <><path d="M4 4H14V14H4Z" fill="#eee" /><path d="M2 2h3v3H2Z" fill="#e8a056" stroke="#a5632d" /></> },
  { name: "三维捕捉", art: <><path d="M5 2H14V9L11 12H3V5Z" fill="#eee" /><path d="M1 11h3v3H1Z" fill="#e8a056" stroke="#a5632d" /></> },
  { name: "对象追踪", on: true, art: <path d="M12 3 3 13H14" strokeWidth="1.500" /> },
  { name: "动态UCS", on: true, art: <><path d="M3 2V13H14M3 13 10 6" strokeWidth="1.300" /><path d="m12 1 1 3 2 1-2 1-1 3-1-3-2-1 2-1Z" fill="#eda139" stroke="none" /></> },
  { name: "动态输入", on: true, art: <><path d="M5 2V11M1 7H9" strokeWidth="1.500" /><path d="M9 8H15V12H9Z" fill="#64717b" /></> },
  { name: "线宽", art: <path d="M8 2V14M2 8H14" stroke="#222" strokeWidth="2" /> },
  { name: "透明度", on: true, art: <><path d="M1 1H15V15H1Z" fill="#8cc5ea" stroke="#225f92" /><path d="M3 4H13M3 7H13M3 10H13M3 13H13" stroke="#fff" strokeDasharray="1.500 1.500" /></> },
  { name: "快捷特性", art: <path d="M5 3H11V13H5ZM5 5h6" strokeWidth="1.500" /> },
  { name: "选择循环", art: <><path d="M4 1V9M1 5H8M6 5H11V10" /><path d="M8 8H14V14H8Z" fill="#72b259" stroke="#326329" strokeWidth="1.500" /></> },
  { name: "注释监视器", art: <path d="M6 2H10V6H14V10H10V14H6V10H2V6H6Z" fill="#eee" /> },
];

const btn = "flex h-full shrink-0 items-center justify-center border-r border-[#666] bg-linear-to-b from-[#c2c2c2] to-[#989898]";
const btnOn = "flex h-full shrink-0 items-center justify-center border-r border-[#666] bg-linear-to-b from-[#d2eef5] to-[#8dc6d6]";

const annotate = <path d="M8 1 10 7 15 14 8 11 1 14 6 7Z" fill="#eee" />;

const StatusBar = () => (
  <footer className="flex h-5 shrink-0 items-center border-t border-[#3f3f3f] bg-linear-to-b from-[#8e8e8e] to-[#777] pb-0.5 text-[9px] leading-none text-[#111]">
    <button type="button" className="flex h-full w-[66px] items-center justify-between border-r border-[#555] bg-linear-to-b from-[#bbb] to-[#959595] pr-1 pl-2">比例 1:100 <Down /></button>
    <span className="w-[107px] pl-[5px] text-[10px] [font-family:'Liberation_Serif',serif]">41575, 33155, 0</span>
    {snapButtons.map((b) => (
      <button key={b.name} type="button" aria-label={b.name} aria-pressed={!!b.on} className={`w-4 ${b.on ? btnOn : btn}`}>
        <Svg className="size-3.5 shrink-0">{b.art}</Svg>
      </button>
    ))}
    <span className="h-full flex-1 bg-linear-to-b from-[#7a7a7a] to-[#969696]" />
    <button type="button" className={`w-6 ${btn}`}>模型</button>
    <button type="button" aria-label="图纸" className={`w-4 ${btn}`}><Svg className="size-3.5"><path d="M2 2H13V12H2ZM1 14H15M5 5V9H9Z" fill="#eee" /></Svg></button>
    <button type="button" aria-label="布局" className={`w-4 ${btn}`}><Svg className="size-3.5"><path d="M1 3H7V9H1ZM9 3H15V9H9ZM1 13H15V11H1Z" fill="#eee" /></Svg></button>
    <span className="h-full w-[13px] border-r border-[#666]" />
    <button type="button" className={`w-[39px] gap-0.5 ${btn}`}><Svg className="size-3">{annotate}</Svg>1:1<Down /></button>
    <button type="button" aria-label="注释可见性" className={`w-4 ${btn}`}><Svg className="size-3.5">{annotate}<circle cx="12" cy="10" r="3" fill="#f3cf62" stroke="#b78d2c" /></Svg></button>
    <button type="button" aria-label="自动添加比例" className={`w-4 ${btn}`}><Svg className="size-3.5"><g opacity="0.5">{annotate}</g></Svg></button>
    <span className="h-full w-1 border-r border-[#666]" />
    <button type="button" aria-label="切换工作空间" className={`w-4 ${btn}`}><Svg className="size-3.5"><circle cx="8" cy="8" r="5.5" fill="#f0f0f0" strokeDasharray="2.500 1" strokeWidth="2.500" /><circle cx="8" cy="8" r="2" /></Svg></button>
    <button type="button" aria-label="锁定" className={`w-4 ${btn}`}><Svg className="size-3.5"><path d="M2 7H10V14H2Z" fill="#eee" /><path d="M9 7V4C9 1 14 1 14 4V6M6 9v3" /></Svg></button>
    <button type="button" aria-label="硬件加速" className={`w-4 ${btn}`}><Svg className="size-3.5"><circle cx="8" cy="8" r="5" fill="#999" stroke="#777" /><path d="M5 7 8 10 11 6" stroke="#ddd" /></Svg></button>
    <button type="button" className={`w-[22px] ${btnOn}`}>编组</button>
    {["基线", "填充", "加粗"].map((t) => <button key={t} type="button" className={`w-[22px] ${btn}`}>{t}</button>)}
    <button type="button" className={`w-[38px] ${btn}`}>动态标注</button>
    <span className="h-full w-1.5 border-r border-[#666]" />
    <button type="button" aria-label="隔离对象" className={`w-5 ${btn}`}><Svg className="size-3.5"><path d="M6 11C2 7 4 1 8 1S14 7 10 11Z" fill="#fbe39b" stroke="#ad8332" /><path d="M6.500 12.500h3M7 14.500h2" /></Svg></button>
    <span className="mr-px ml-1 shrink-0"><Down /></span>
    <button type="button" aria-label="全屏显示" className={`w-4 ${btn}`}><Svg className="size-3.5"><path d="M2 3H14V13H2Z" fill="#f5f5f5" /><path d="M2 4H14" stroke="#4a5c78" strokeWidth="2" /></Svg></button>
    <Svg className="ml-[3px] size-3 shrink-0"><path d="M13 3v2M13 8v2M13 13v2M8 8v2M8 13v2M3 13v2" stroke="#ddd" strokeWidth="2" /></Svg>
  </footer>
);

/* ---------- overlays ---------- */

const Watermark = () => (
  <div className="pointer-events-none absolute right-[54px] bottom-[22px] z-30 w-[178px] leading-none text-white/70 [-webkit-text-stroke:1px_rgb(190_190_190/0.45)]">
    <div className="flex h-[58px] items-end">
      <span className="text-[38px] leading-[34px] font-bold [font-family:'Liberation_Sans',sans-serif]">Bai</span>
      <div className="relative h-[58px] w-[52px]">
        <svg viewBox="0 0 52 60" className="h-full w-full" fill="#fff" fillOpacity="0.7" aria-hidden="true">
          <ellipse cx="7" cy="24" rx="6.500" ry="8.500" />
          <ellipse cx="20" cy="11" rx="6.500" ry="9" />
          <ellipse cx="36" cy="12" rx="6.500" ry="9" transform="rotate(10 36 12)" />
          <ellipse cx="46" cy="28" rx="6.500" ry="8.500" transform="rotate(15 46 28)" />
          <path d="M26 26C34 26 36 35 44 42 52 51 45 60 37 59 29 57 23 57 15 59 5 60 0 50 8 42 16 36 18 26 26 26Z" />
        </svg>
        <span className="absolute inset-x-0 bottom-1 text-center text-[22px] font-bold text-[#a8a8a8]/80">du</span>
      </div>
      <span className="ml-1 text-[30px] font-bold">经验</span>
    </div>
    <p className="mt-1 text-[20px] leading-6 whitespace-nowrap [font-family:'Noto_Sans',sans-serif]">jingyan.baidu.com</p>
  </div>
);

const PointerArrow = () => (
  <svg width="72" height="54" className="pointer-events-none absolute top-[147px] left-[53px] z-10" aria-hidden="true">
    <path d="M0 2 16 0 15 4 70 52 12 11 9 15Z" fill="#ea4a42" />
  </svg>
);

export default function App() {
  return (
    <div className="relative flex h-screen w-full flex-col overflow-hidden bg-[#616161] leading-none [font-family:'Liberation_Sans','Noto_Sans_CJK_SC',sans-serif]">
      <div className="flex shrink-0 flex-col border-t-2 border-[#3d3d3d] bg-linear-to-b from-[#a2a2a2] to-[#666]">
        <TitleBar />
        <MenuBar />
      </div>
      <Toolbars />
      <div className="flex min-h-0 flex-1">
        <Palette />
        <div className="flex min-w-0 flex-1 flex-col">
          <div className="flex min-h-0 flex-1">
            <aside aria-label="绘图" className="mr-1 flex w-[17px] shrink-0 flex-col self-start border-x border-b border-[#999] bg-[#f0f0f1] pt-0.5">
              <Grip />
              <ToolColumn items={drawIcons} />
            </aside>
            <main className="mb-1 flex min-w-0 flex-1 flex-col border border-[#d8d6c8]">
              <div className="flex min-h-0 flex-1">
                <Drawing />
                <div className="flex w-3 shrink-0 flex-col items-center bg-[#fbfbf6]">
                  <ScrollArrow d={UP} label="向上滚动" />
                  <span className="h-3 w-[11px] rounded-[2px] border border-[#aebff0] bg-[#c6d5fc]" />
                  <span className="flex-1" />
                  <ScrollArrow d={DOWN} label="向下滚动" />
                </div>
              </div>
              <SheetTabs />
            </main>
            <aside aria-label="修改" className="mr-[5px] mb-1 ml-[5px] flex w-4 shrink-0 flex-col overflow-hidden bg-[#f0f0f1]">
              <Grip />
              <div className="flex flex-col py-0.5"><ToolColumn items={modifyIcons} /></div>
              <Grip />
              <ToolColumn items={orderIcons} />
              <span className="my-0.5 h-px shrink-0 bg-[#bbb]" />
              <button type="button" aria-label="文字前置" className="flex h-4 shrink-0 flex-col items-center text-[6px] font-bold text-[#333]">
                ABC<Svg className="size-2.5"><path d="M2 4h6v6M6 8l2 2 2-2M10 3h5v9h-5" strokeWidth="1.500" /></Svg>
              </button>
              <button type="button" aria-label="填充后置" className="flex h-4 shrink-0 justify-center"><Svg className="size-3.5"><path d="M2 2H12V9H2Z" fill="#7893ad" /><path d="M6 12h7M13 8v6" /></Svg></button>
            </aside>
          </div>
          <CommandLine />
        </div>
      </div>
      <StatusBar />
      <WallDialog />
      <PointerArrow />
      <Watermark />
      <button type="button" aria-label="加速球" className="absolute top-[409px] -right-[19px] z-30 flex size-8 items-center rounded-full border-2 border-[#d3ecd3] bg-linear-to-b from-[#5bcb62] to-[#2da33b] pl-px text-[11px] font-bold text-white">57</button>
    </div>
  );
}
